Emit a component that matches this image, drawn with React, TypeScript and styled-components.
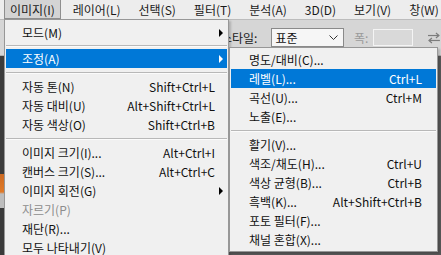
import React from "react";
import styled, { createGlobalStyle } from "styled-components";

const GlobalStyle = createGlobalStyle`
  html, body { margin: 0; padding: 0; }
  body { width: 441px; height: 255px; overflow: hidden; background: #d6d6d6; }
  #root { width: 441px; height: 255px; }
`;

const FONT = `"Noto Sans CJK KR", "Noto Sans", sans-serif`;

const Screen = styled.div`
  position: relative;
  width: 441px;
  height: 255px;
  overflow: hidden;
  display: flex;
  flex-direction: column;
  font-family: ${FONT};
  font-size: 12px;
  color: #111;
  background: #d6d6d6;
`;

const MenuBar = styled.div`
  flex: none;
  height: 19px;
  display: flex;
  align-items: stretch;
  gap: 6px;
  padding-left: 4px;
  background: #ededed;
  border-bottom: 1px solid #bcbcbc;
`;

const BarItem = styled.div<{ $active?: boolean }>`
  display: flex;
  align-items: center;
  padding: 0 5px;
  white-space: nowrap;
  color: #1a1a1a;
  border: 1px solid ${(p) => (p.$active ? "#8e8e8e" : "transparent")};
  border-top: none;
  background: ${(p) => (p.$active ? "#d4d4d4" : "transparent")};
`;

const OptionsBar = styled.div`
  flex: none;
  height: 35px;
  display: flex;
  align-items: center;
  padding-left: 221px;
  background: #d6d6d6;
  border-bottom: 1px solid #b0b0b0;
  white-space: nowrap;
`;

const OptLabel = styled.span<{ $disabled?: boolean }>`
  color: ${(p) => (p.$disabled ? "#9a9a9a" : "#1a1a1a")};
  margin-right: ${(p) => (p.$disabled ? 5 : 14)}px;
`;

const SelectBox = styled.div`
  width: 73px;
  height: 19px;
  box-sizing: border-box;
  display: flex;
  align-items: center;
  justify-content: space-between;
  padding: 0 5px 0 3px;
  background: #f6f6f6;
  border: 1px solid #8a8a8a;
  margin-right: 10px;
`;

const InputBox = styled.div`
  width: 40px;
  height: 17px;
  box-sizing: border-box;
  background: #d9d9d9;
  border: 1px solid #f4f4f4;
  margin-right: 14px;
`;

const Workspace = styled.div`
  flex: 1;
  display: flex;
  background: #5a5a5a;
`;

const ToolStrip = styled.div`
  width: 30px;
  background: linear-gradient(
    to bottom,
    #3c3c3c 0px,
    #3c3c3c 118px,
    #cc6a22 118px,
    #e07a28 136px,
    #bdbdbd 138px,
    #bdbdbd 152px,
    #3a3a3a 152px
  );
`;

const Menu = styled.div<{ $left: number; $top: number; $width: number; $pad: number }>`
  position: absolute;
  left: ${(p) => p.$left}px;
  top: ${(p) => p.$top}px;
  width: ${(p) => p.$width}px;
  box-sizing: border-box;
  padding: ${(p) => p.$pad}px 1px;
  background: #f0f0f0;
  border: 1px solid #979797;
  box-shadow: 2px 2px 2px rgba(0, 0, 0, 0.18);
  display: flex;
  flex-direction: column;
`;

const Row = styled.div<{ $active?: boolean; $disabled?: boolean; $indent: number; $tail: number }>`
  height: 19px;
  display: grid;
  grid-template-columns: 1fr auto ${(p) => p.$tail}px;
  align-items: center;
  padding-left: ${(p) => p.$indent}px;
  white-space: nowrap;
  background: ${(p) => (p.$active ? "#0078d7" : "transparent")};
  color: ${(p) => (p.$active ? "#fff" : p.$disabled ? "#8d8d8d" : "#111")};
`;

const Shortcut = styled.span`
  text-align: right;
`;

const ArrowCell = styled.span`
  display: flex;
  justify-content: center;
`;

const Arrow = styled.span<{ $light?: boolean }>`
  width: 0;
  height: 0;
  border-top: 4px solid transparent;
  border-bottom: 4px solid transparent;
  border-left: 4px solid ${(p) => (p.$light ? "#fff" : "#000")};
`;

const Separator = styled.div<{ $h: number }>`
  height: ${(p) => p.$h}px;
  display: flex;
  flex-direction: column;
  justify-content: center;
  &::before {
    content: "";
    display: block;
    height: 1px;
    background: #b8b8b8;
  }
  &::after {
    content: "";
    display: block;
    height: 1px;
    background: #fbfbfb;
  }
`;

type Item =
  | { sep: true; h?: number }
  | {
      sep?: false;
      label: string;
      shortcut?: string;
      arrow?: boolean;
      active?: boolean;
      disabled?: boolean;
    };

const mainItems: Item[] = [
  { label: "모드(M)", arrow: true },
  { sep: true, h: 7 },
  { label: "조정(A)", arrow: true, active: true },
  { sep: true },
  { label: "자동 톤(N)", shortcut: "Shift+Ctrl+L" },
  { label: "자동 대비(U)", shortcut: "Alt+Shift+Ctrl+L" },
  { label: "자동 색상(O)", shortcut: "Shift+Ctrl+B" },
  { sep: true },
  { label: "이미지 크기(I)...", shortcut: "Alt+Ctrl+I" },
  { label: "캔버스 크기(S)...", shortcut: "Alt+Ctrl+C" },
  { label: "이미지 회전(G)", arrow: true },
  { label: "자르기(P)", disabled: true },
  { label: "재단(R)..." },
  { label: "모두 나타내기(V)" },
];

const subItems: Item[] = [
  { label: "명도/대비(C)..." },
  { label: "레벨(L)...", shortcut: "Ctrl+L", active: true },
  { label: "곡선(U)...", shortcut: "Ctrl+M" },
  { label: "노출(E)..." },
  { sep: true },
  { label: "활기(V)..." },
  { label: "색조/채도(H)...", shortcut: "Ctrl+U" },
  { label: "색상 균형(B)...", shortcut: "Ctrl+B" },
  { label: "흑백(K)...", shortcut: "Alt+Shift+Ctrl+B" },
  { label: "포토 필터(F)..." },
  { label: "채널 혼합(X)..." },
];

const barItems = ["이미지(I)", "레이어(L)", "선택(S)", "필터(T)", "분석(A)", "3D(D)", "보기(V)", "창(W)"];

function MenuList({ items, indent, tail }: { items: Item[]; indent: number; tail: number }) {
  return (
    <>
      {items.map((it, i) =>
        it.sep ? (
          <Separator key={i} $h={it.h ?? 9} />
        ) : (
          <Row key={i} $active={it.active} $disabled={it.disabled} $indent={indent} $tail={tail}>
            <span>{it.label}</span>
            <Shortcut>{it.shortcut ?? ""}</Shortcut>
            <ArrowCell>{it.arrow && <Arrow $light={it.active} />}</ArrowCell>
          </Row>
        )
      )}
    </>
  );
}

const Chevron = () => (
  <svg width="9" height="6" viewBox="0 0 9 6">
    <polyline points="0.5,0.5 4.5,4.5 8.5,0.5" fill="none" stroke="#333" strokeWidth="1" />
  </svg>
);

const SwapIcon = () => (
  <svg width="14" height="12" viewBox="0 0 14 12">
    <g stroke="#7c7c7c" strokeWidth="1.2" fill="none">
      <line x1="1" y1="3.5" x2="12" y2="3.5" />
      <polyline points="9,1 12,3.5 9,6" />
      <line x1="2" y1="8.5" x2="13" y2="8.5" />
      <polyline points="5,6 2,8.5 5,11" />
    </g>
  </svg>
);

export default function App() {
  return (
    <>
      <GlobalStyle />
      <Screen>
        <MenuBar>
          {barItems.map((b, i) => (
            <BarItem key={b} $active={i === 0}>
              {b}
            </BarItem>
          ))}
        </MenuBar>
        <OptionsBar>
          <OptLabel>스타일:</OptLabel>
          <SelectBox>
            <span>표준</span>
            <Chevron />
          </SelectBox>
          <OptLabel $disabled>폭:</OptLabel>
          <InputBox />
          <SwapIcon />
        </OptionsBar>
        <Workspace>
          <ToolStrip />
        </Workspace>
        <Menu $left={4} $top={19} $width={225} $pad={3}>
          <MenuList items={mainItems} indent={16} tail={12} />
        </Menu>
        <Menu $left={229} $top={47} $width={209} $pad={2}>
          <MenuList items={subItems} indent={18} tail={14} />
        </Menu>
      </Screen>
    </>
  );
}
